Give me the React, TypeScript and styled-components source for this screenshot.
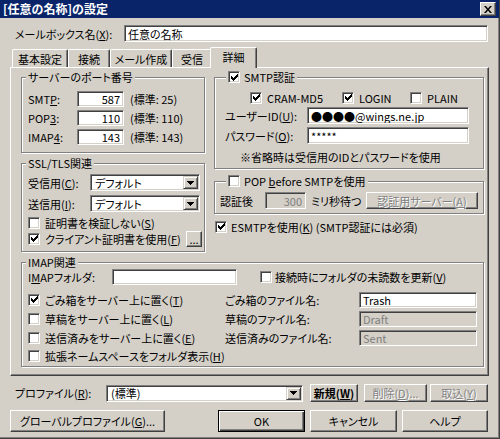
import React from 'react';
import styled, { createGlobalStyle } from 'styled-components';

const GlobalStyle = createGlobalStyle`
  html, body {
    margin: 0;
    padding: 0;
    background: #d4d0c8;
  }
  body {
    font-family: "Noto Sans CJK JP", "Liberation Sans", sans-serif;
    font-size: 11px;
    line-height: 14px;
    font-feature-settings: "palt";
    color: #000;
  }
  * {
    box-sizing: border-box;
  }
`;

const Window = styled.div`
  width: 500px;
  height: 439px;
  background: #d4d0c8;
  border-right: 1px solid #404040;
  border-bottom: 1px solid #404040;
  box-shadow: inset -1px -1px 0 #808080;
  display: flex;
  flex-direction: column;
  overflow: hidden;
`;

const TitleBar = styled.div`
  height: 18px;
  flex: none;
  background: #0a246a;
  color: #fff;
  font-weight: bold;
  font-size: 12px;
  font-feature-settings: normal;
  display: flex;
  align-items: center;
  justify-content: space-between;
  padding: 0 3px 0 3px;
`;

const CloseBox = styled.span`
  width: 16px;
  height: 14px;
  background: #d4d0c8;
  border: 1px solid;
  border-color: #fff #404040 #404040 #fff;
  box-shadow: inset -1px -1px 0 #808080;
  display: flex;
  align-items: center;
  justify-content: center;
`;

const Body = styled.div`
  flex: 1;
  display: flex;
  flex-direction: column;
  padding: 7px 10px 0 10px;
`;

const Row = styled.div<{ $h?: number; $mt?: number; $pl?: number; $spread?: boolean }>`
  display: flex;
  align-items: center;
  justify-content: ${(p) => (p.$spread ? 'space-between' : 'flex-start')};
  flex: none;
  height: ${(p) => p.$h ?? 17}px;
  margin-top: ${(p) => p.$mt ?? 0}px;
  padding-left: ${(p) => p.$pl ?? 0}px;
  white-space: nowrap;
`;

const Label = styled.span<{ $w?: number; $ml?: number }>`
  flex: none;
  width: ${(p) => (p.$w ? `${p.$w}px` : 'auto')};
  margin-left: ${(p) => p.$ml ?? 0}px;
  white-space: nowrap;
`;

const TextBox = styled.input<{ $w: number; $h?: number; $right?: boolean }>`
  flex: none;
  width: ${(p) => p.$w}px;
  height: ${(p) => p.$h ?? 17}px;
  margin: 0;
  padding: 0 3px;
  font: inherit;
  font-feature-settings: "palt";
  color: #000;
  background: #fff;
  border: 1px solid;
  border-color: #808080 #fff #fff #808080;
  box-shadow: inset 1px 1px 0 #404040, inset -1px -1px 0 #d4d0c8;
  text-align: ${(p) => (p.$right ? 'right' : 'left')};
  outline: none;
  &:disabled {
    background: #d4d0c8;
    color: #808080;
  }
`;

const ComboBox = styled.div<{ $w: number }>`
  flex: none;
  width: ${(p) => p.$w}px;
  height: 17px;
  background: #fff;
  border: 1px solid;
  border-color: #808080 #fff #fff #808080;
  box-shadow: inset 1px 1px 0 #404040, inset -1px -1px 0 #d4d0c8;
  display: flex;
  align-items: stretch;
  padding: 1px;
`;

const ComboText = styled.span`
  flex: 1;
  padding-left: 3px;
  display: flex;
  align-items: center;
`;

const DropButton = styled.span`
  width: 15px;
  flex: none;
  background: #d4d0c8;
  border: 1px solid;
  border-color: #d4d0c8 #404040 #404040 #d4d0c8;
  box-shadow: inset 1px 1px 0 #fff, inset -1px -1px 0 #808080;
  display: flex;
  align-items: center;
  justify-content: center;
`;

const Button = styled.button<{ $w: number; $h?: number; $ml?: number; $default?: boolean; $bold?: boolean }>`
  flex: none;
  width: ${(p) => p.$w}px;
  height: ${(p) => p.$h ?? 18}px;
  margin: 0 0 0 ${(p) => p.$ml ?? 0}px;
  padding: 0;
  font: inherit;
  font-feature-settings: "palt";
  font-weight: ${(p) => (p.$bold ? 'bold' : 'normal')};
  color: #000;
  background: #d4d0c8;
  border: 1px solid;
  border-color: ${(p) => (p.$default ? '#000' : '#fff #404040 #404040 #fff')};
  box-shadow: ${(p) =>
    p.$default
      ? 'inset 1px 1px 0 #fff, inset -1px -1px 0 #404040, inset -2px -2px 0 #808080'
      : 'inset -1px -1px 0 #808080'};
  display: flex;
  align-items: center;
  justify-content: center;
  white-space: nowrap;
  &:disabled {
    color: #808080;
    text-shadow: 1px 1px 0 #fff;
  }
`;

const TabStrip = styled.div`
  display: flex;
  align-items: flex-end;
  height: 20px;
  margin-top: 5px;
  padding-left: 2px;
  position: relative;
  z-index: 1;
`;

const Tab = styled.div<{ $w: number; $active?: boolean }>`
  flex: none;
  width: ${(p) => p.$w}px;
  height: ${(p) => (p.$active ? 21 : 18)}px;
  margin: ${(p) => (p.$active ? '0 -2px -1px -2px' : '0')};
  background: #d4d0c8;
  border-left: 1px solid #fff;
  border-top: 1px solid #fff;
  border-right: 1px solid #404040;
  border-radius: 2px 2px 0 0;
  box-shadow: inset -1px 0 0 #808080;
  display: flex;
  align-items: center;
  justify-content: center;
  padding-bottom: ${(p) => (p.$active ? 2 : 0)}px;
  position: relative;
  z-index: ${(p) => (p.$active ? 2 : 1)};
`;

const Panel = styled.div`
  height: 309px;
  flex: none;
  border: 1px solid;
  border-color: #fff #404040 #404040 #fff;
  box-shadow: inset -1px -1px 0 #808080;
  padding: 9px 0 0 10px;
  display: grid;
  grid-template-columns: 184px 270px;
  column-gap: 9px;
  row-gap: 10px;
  align-content: start;
  align-items: start;
`;

const Column = styled.div`
  display: flex;
  flex-direction: column;
`;

const Group = styled.div<{ $mt?: number; $wide?: boolean }>`
  margin-top: ${(p) => p.$mt ?? 0}px;
  grid-column: ${(p) => (p.$wide ? '1 / -1' : 'auto')};
  width: ${(p) => (p.$wide ? '463px' : 'auto')};
  border: 1px solid #808080;
  box-shadow: inset 1px 1px 0 #fff, 1px 1px 0 #fff;
  display: flex;
  flex-direction: column;
`;

const Caption = styled.div<{ $indent?: number }>`
  align-self: flex-start;
  height: 14px;
  margin: -8px 0 0 ${(p) => p.$indent ?? 4}px;
  padding: 0 2px;
  background: #d4d0c8;
  display: flex;
  align-items: center;
  white-space: nowrap;
`;

const GroupBody = styled.div<{ $pad: string; $gap?: number }>`
  display: flex;
  flex-direction: column;
  padding: ${(p) => p.$pad};
  gap: ${(p) => p.$gap ?? 0}px;
`;

const Box = styled.span`
  width: 12px;
  height: 12px;
  flex: none;
  background: #fff;
  border: 1px solid;
  border-color: #808080 #fff #fff #808080;
  box-shadow: inset 1px 1px 0 #404040, inset -1px -1px 0 #d4d0c8;
  display: flex;
  align-items: center;
  justify-content: center;
`;

const CheckLabel = styled.label<{ $gap?: number; $w?: number }>`
  display: inline-flex;
  align-items: center;
  flex: none;
  gap: ${(p) => p.$gap ?? 5}px;
  width: ${(p) => (p.$w ? `${p.$w}px` : 'auto')};
  white-space: nowrap;
`;

const CheckMark = () => (
  <svg width="7" height="7" viewBox="0 0 7 7" shapeRendering="crispEdges">
    <path
      d="M0 2h1v3h-1z M1 3h1v3h-1z M2 4h1v3h-1z M3 3h1v3h-1z M4 2h1v3h-1z M5 1h1v3h-1z M6 0h1v3h-1z"
      fill="#000"
    />
  </svg>
);

const Check: React.FC<{ checked?: boolean; gap?: number; w?: number; children: React.ReactNode }> = ({
  checked,
  gap,
  w,
  children,
}) => (
  <CheckLabel $gap={gap} $w={w}>
    <Box>{checked && <CheckMark />}</Box>
    <span>{children}</span>
  </CheckLabel>
);

const Arrow = () => (
  <svg width="7" height="4" viewBox="0 0 7 4" shapeRendering="crispEdges">
    <path d="M0 0h7v1h-7z M1 1h5v1h-5z M2 2h3v1h-3z M3 3h1v1h-1z" fill="#000" />
  </svg>
);

const Combo: React.FC<{ w: number; value: string }> = ({ w, value }) => (
  <ComboBox $w={w}>
    <ComboText>{value}</ComboText>
    <DropButton>
      <Arrow />
    </DropButton>
  </ComboBox>
);

const Note = styled.span<{ $ml?: number }>`
  margin-left: ${(p) => p.$ml ?? 6}px;
`;

const ButtonRow = styled.div<{ $h: number; $mt: number; $pl?: number }>`
  display: flex;
  align-items: center;
  height: ${(p) => p.$h}px;
  margin-top: ${(p) => p.$mt}px;
  padding-left: ${(p) => p.$pl ?? 0}px;
  flex: none;
  white-space: nowrap;
`;

const ports = [
  { label: <>SMT<u>P</u>:</>, value: '587', std: '25' },
  { label: <>POP<u>3</u>:</>, value: '110', std: '110' },
  { label: <>IMAP<u>4</u>:</>, value: '143', std: '143' },
];

const imapRows = [
  { check: <>ごみ箱をサーバー上に置く(<u>T</u>)</>, checked: true, file: 'ごみ箱のファイル名:', value: 'Trash', disabled: false },
  { check: <>草稿をサーバー上に置く(<u>L</u>)</>, checked: false, file: '草稿のファイル名:', value: 'Draft', disabled: true },
  { check: <>送信済みをサーバー上に置く(<u>E</u>)</>, checked: false, file: '送信済みのファイル名:', value: 'Sent', disabled: true },
];

const App: React.FC = () => {
  return (
    <Window>
      <GlobalStyle />
      <TitleBar>
        <span>[任意の名称]の設定</span>
        <CloseBox>
          <svg width="8" height="7" viewBox="0 0 8 7">
            <path d="M0 0h2l2 2.5 2-2.5h2l-3 3.5 3 3.5h-2l-2-2.5-2 2.5h-2l3-3.5z" fill="#000" />
          </svg>
        </CloseBox>
      </TitleBar>
      <Body>
        <Row $pl={5}>
          <Label $w={109}>
            メールボックス名(<u>X</u>):
          </Label>
          <TextBox $w={364} defaultValue="任意の名称" />
        </Row>

        <TabStrip>
          <Tab $w={56}>基本設定</Tab>
          <Tab $w={42}>接続</Tab>
          <Tab $w={62}>メール作成</Tab>
          <Tab $w={40}>受信</Tab>
          <Tab $w={47} $active>
            詳細
          </Tab>
        </TabStrip>

        <Panel>
          <Column>
            <Group>
              <Caption>サーバーのポート番号</Caption>
              <GroupBody $pad="7px 0 7px 6px" $gap={3}>
                {ports.map((p, i) => (
                  <Row key={i} $h={16}>
                    <Label $w={49}>{p.label}</Label>
                    <TextBox $w={47} $h={16} $right defaultValue={p.value} />
                    <Note>(標準: {p.std})</Note>
                  </Row>
                ))}
              </GroupBody>
            </Group>

            <Group $mt={10}>
              <Caption>SSL/TLS関連</Caption>
              <GroupBody $pad="4px 2px 4px 6px">
                <Row>
                  <Label $w={62}>
                    受信用(<u>C</u>):
                  </Label>
                  <Combo w={110} value="デフォルト" />
                </Row>
                <Row $mt={4}>
                  <Label $w={62}>
                    送信用(<u>I</u>):
                  </Label>
                  <Combo w={110} value="デフォルト" />
                </Row>
                <Row $h={15} $mt={3}>
                  <Check>
                    証明書を検証しない(<u>S</u>)
                  </Check>
                </Row>
                <Row $spread>
                  <Check checked>
                    クライアント証明書を使用(<u>F</u>)
                  </Check>
                  <Button $w={16} $h={16}>
                    ...
                  </Button>
                </Row>
              </GroupBody>
            </Group>
          </Column>

          <Column>
            <Group>
              <Caption $indent={11}>
                <Check checked gap={4}>
                  SMTP認証
                </Check>
              </Caption>
              <GroupBody $pad="6px 0 4px 0">
                <Row $h={15} $pl={35}>
                  <Check checked w={92}>
                    CRAM-MD5
                  </Check>
                  <Check checked w={68}>
                    LOGIN
                  </Check>
                  <Check>PLAIN</Check>
                </Row>
                <Row $mt={2} $pl={10}>
                  <Label $w={82}>
                    ユーザーID(<u>U</u>):
                  </Label>
                  <TextBox $w={162} defaultValue="●●●●@wings.ne.jp" />
                </Row>
                <Row $mt={3} $pl={10}>
                  <Label $w={82}>
                    パスワード(<u>O</u>):
                  </Label>
                  <TextBox $w={162} defaultValue="*****" />
                </Row>
                <Row $h={14} $mt={6} $pl={25}>
                  ※省略時は受信用のIDとパスワードを使用
                </Row>
              </GroupBody>
            </Group>

            <Group $mt={12}>
              <Caption $indent={11}>
                <Check gap={4}>
                  POP <u>b</u>efore SMTPを使用
                </Check>
              </Caption>
              <GroupBody $pad="4px 0 4px 5px">
                <Row>
                  <Label $w={45}>認証後</Label>
                  <TextBox $w={41} $right disabled defaultValue="300" />
                  <Label $w={55} $ml={5}>
                    ミリ秒待つ
                  </Label>
                  <Button $w={112} $h={17} disabled>
                    認証用サーバー(<u>A</u>)
                  </Button>
                </Row>
              </GroupBody>
            </Group>

            <Row $h={15} $mt={5} $pl={1}>
              <Check checked gap={4}>
                ESMTPを使用(<u>K</u>) (SMTP認証には必須)
              </Check>
            </Row>
          </Column>

          <Group $wide>
            <Caption>IMAP関連</Caption>
            <GroupBody $pad="0 0 2px 6px">
              <Row $h={16}>
                <Label $w={84}>
                  I<u>M</u>APフォルダ:
                </Label>
                <TextBox $w={125} $h={16} defaultValue="" />
                <Label $ml={23}>
                  <Check gap={3}>
                    接続時にフォルダの未読数を更新(<u>V</u>)
                  </Check>
                </Label>
              </Row>
              {imapRows.map((r, i) => (
                <Row key={i} $h={19} $mt={i === 0 ? 5 : 0}>
                  <Check checked={r.checked} w={197}>
                    {r.check}
                  </Check>
                  <Label $w={134}>{r.file}</Label>
                  <TextBox $w={118} $h={16} disabled={r.disabled} defaultValue={r.value} />
                </Row>
              ))}
              <Row $h={17}>
                <Check>
                  拡張ネームスペースをフォルダ表示(<u>H</u>)
                </Check>
              </Row>
            </GroupBody>
          </Group>
        </Panel>

        <ButtonRow $h={18} $mt={8} $pl={5}>
          <Label $w={91}>
            プロファイル(<u>R</u>):
          </Label>
          <Combo w={197} value="(標準)" />
          <Button $w={48} $ml={7} $bold>
            新規(<u>W</u>)
          </Button>
          <Button $w={63} $ml={6} disabled>
            削除(<u>D</u>)...
          </Button>
          <Button $w={58} $ml={3} disabled>
            取込(<u>Y</u>)
          </Button>
        </ButtonRow>

        <ButtonRow $h={22} $mt={8}>
          <Button $w={155} $h={22}>
            グローバルプロファイル(<u>G</u>)...
          </Button>
          <Button $w={87} $h={22} $ml={53} $default>
            OK
          </Button>
          <Button $w={87} $h={22} $ml={5}>
            キャンセル
          </Button>
          <Button $w={86} $h={22} $ml={5}>
            ヘルプ
          </Button>
        </ButtonRow>
      </Body>
    </Window>
  );
};

export default App;
